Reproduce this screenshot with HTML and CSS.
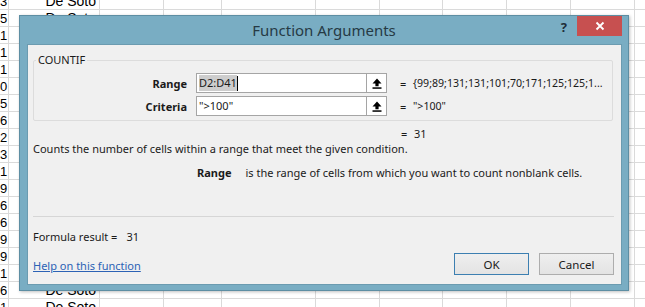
FILE: index.html
```html
<!DOCTYPE html>
<html lang="en">
<head>
    <meta charset="UTF-8">
    <title>Function Arguments</title>
    <link rel="stylesheet" href="styles.css">
</head>
<body>
    <!-- Spreadsheet behind the dialog -->
    <div class="sheet">
        <div class="col col-a">
            <div>3</div><div>5</div><div>1</div><div>1</div><div>1</div><div>0</div><div>5</div>
            <div>6</div><div>2</div><div>3</div><div>1</div><div>9</div><div>6</div><div>6</div>
            <div>9</div><div>9</div><div>1</div><div>6</div><div>1</div>
        </div>
        <div class="col col-b">
            <div>De Soto</div><div>De Soto</div><div></div><div></div><div></div><div></div><div></div>
            <div></div><div></div><div></div><div></div><div></div><div></div><div></div>
            <div></div><div></div><div></div><div>De Soto</div><div>De Soto</div>
        </div>
        <div class="col w63"></div>
        <div class="col w57"></div>
        <div class="col w93"></div>
        <div class="col w63"></div>
        <div class="col w62"></div>
        <div class="col w63"></div>
        <div class="col w63"></div>
        <div class="col w63"></div>
        <div class="col"></div>
    </div>

    <!-- Function Arguments dialog -->
    <div class="dialog">
        <div class="titlebar">
            <span></span>
            <div class="title">Function Arguments</div>
            <div class="controls">
                <span class="help">?</span>
                <span class="close">
                    <svg width="10" height="10" viewBox="0 0 10 10"><path d="M1.5 1.5 L8.5 8.5 M8.5 1.5 L1.5 8.5" stroke="#fff" stroke-width="1.8"/></svg>
                </span>
            </div>
        </div>

        <div class="content">
            <fieldset class="group">
                <legend>COUNTIF</legend>
                <div class="arg-row">
                    <label>Range</label>
                    <div class="field">
                        <span class="text"><span class="sel">D2:D41</span><span class="caret"></span></span>
                        <span class="pick">
                            <svg width="10" height="11" viewBox="0 0 10 11"><path d="M5 0.5 L9.5 5.5 L6.6 5.5 L6.6 8.2 L3.4 8.2 L3.4 5.5 L0.5 5.5 Z" fill="#000"/><rect x="0.5" y="9.3" width="9" height="1.5" fill="#000"/></svg>
                        </span>
                    </div>
                    <span class="eq">=</span>
                    <span class="val">{99;89;131;131;101;70;171;125;125;1...</span>
                </div>
                <div class="arg-row">
                    <label>Criteria</label>
                    <div class="field">
                        <span class="text">"&gt;100"</span>
                        <span class="pick">
                            <svg width="10" height="11" viewBox="0 0 10 11"><path d="M5 0.5 L9.5 5.5 L6.6 5.5 L6.6 8.2 L3.4 8.2 L3.4 5.5 L0.5 5.5 Z" fill="#000"/><rect x="0.5" y="9.3" width="9" height="1.5" fill="#000"/></svg>
                        </span>
                    </div>
                    <span class="eq">=</span>
                    <span class="val">"&gt;100"</span>
                </div>
            </fieldset>

            <div class="result-row"><span class="eq">=</span><span class="val">31</span></div>
            <p class="desc">Counts the number of cells within a range that meet the given condition.</p>
            <p class="arg-help"><b>Range</b>is the range of cells from which you want to count nonblank cells.</p>

            <hr class="sep">
            <div class="formula">Formula result =<span class="formula-val">31</span></div>

            <div class="footer">
                <a href="#" class="help-link">Help on this function</a>
                <div class="buttons">
                    <button class="btn ok">OK</button>
                    <button class="btn">Cancel</button>
                </div>
            </div>
        </div>
    </div>
</body>
</html>
```

FILE: styles.css
```css
body {
    margin: 0;
    width: 645px;
    height: 307px;
    overflow: hidden;
    position: relative;
    background: #fff;
    font-family: "Noto Sans", "Open Sans", sans-serif;
    font-size: 11px;
    color: #1a1a1a;
}

/* spreadsheet */
.sheet {
    display: flex;
    margin-top: -7px;
    height: 323px;
    background: repeating-linear-gradient(to bottom, #fff 0 16px, #dadada 16px 17px);
    font-family: "Liberation Sans", sans-serif;
    font-size: 14px;
    color: #000;
}
.col {
    flex: none;
    border-right: 1px solid #dadada;
}
.col > div {
    height: 17px;
    line-height: 17px;
    overflow: hidden;
    white-space: nowrap;
}
.col-a {
    width: 8px;
    text-align: right;
    font-size: 13px;
}
.col-a > div {
    padding-right: 1px;
}
.col-b {
    width: 90px;
    text-align: right;
}
.col-b > div {
    padding-right: 3px;
}
.w57 { width: 57px; }
.w62 { width: 62px; }
.w63 { width: 63px; }
.w93 { width: 93px; }
.col:last-child {
    flex: 1;
    border-right: none;
}

/* dialog window */
.dialog {
    position: absolute;
    left: 19px;
    top: 15px;
    width: 608px;
    height: 274px;
    background: #79adc3;
    border: 1px solid #5d8ea3;
    box-shadow: 1px 1px 3px rgba(0, 0, 0, 0.25);
    display: flex;
    flex-direction: column;
}
.titlebar {
    height: 28px;
    display: grid;
    grid-template-columns: 1fr auto 1fr;
    align-items: start;
}
.title {
    font-size: 15px;
    line-height: 28px;
    color: #263a45;
}
.controls {
    justify-self: end;
    display: flex;
    align-items: flex-start;
    margin-right: 6px;
}
.help {
    font-weight: bold;
    font-size: 13px;
    color: #1e2e38;
    line-height: 22px;
    margin-right: 10px;
}
.close {
    width: 45px;
    height: 20px;
    background: #c75050;
    display: flex;
    align-items: center;
    justify-content: center;
}

.content {
    flex: 1;
    margin: 0 6px 5px 7px;
    background: #f0f0f0;
    border: 1px solid #6b9bb0;
    display: flex;
    flex-direction: column;
}

.group {
    margin: 8px 8px 0 5px;
    padding: 6px 0 4px 0;
    border: 1px solid #dcdcdc;
    border-radius: 2px;
    min-width: 0;
}
.group legend {
    margin-left: 2px;
    padding: 0 2px;
    line-height: 14px;
    font-size: 11px;
}

.arg-row {
    display: grid;
    grid-template-columns: 162px 191px 26px 1fr;
    align-items: center;
    height: 20px;
    margin-bottom: 3px;
}
.arg-row:last-child {
    margin-bottom: 0;
}
.arg-row label {
    text-align: right;
    padding-right: 9px;
    font-weight: bold;
}
.field {
    height: 18px;
    border: 1px solid #a5a5a5;
    background: #fff;
    display: flex;
}
.text {
    flex: 1;
    padding-left: 2px;
    line-height: 18px;
    display: flex;
    align-items: center;
}
.sel {
    background: #cdcdcd;
    line-height: 16px;
}
.caret {
    width: 1px;
    height: 15px;
    background: #000;
}
.pick {
    width: 19px;
    border-left: 1px solid #a5a5a5;
    display: flex;
    align-items: center;
    justify-content: center;
}
.eq {
    padding-left: 13px;
}
.val {
    white-space: nowrap;
    font-size: 10.6px;
}

.result-row {
    display: flex;
    margin: 5px 0 0 360px;
    line-height: 16px;
}
.result-row .eq {
    width: 26px;
    box-sizing: border-box;
}
.result-row .val {
    font-size: 11px;
}

.desc {
    margin: -1px 0 0 5px;
    line-height: 16px;
}
.arg-help {
    margin: 8px 0 0 169px;
    line-height: 16px;
}
.arg-help b {
    margin-right: 14px;
}

.sep {
    margin: 35px 7px 0 5px;
    border: none;
    border-top: 1px solid #d6d6d6;
    height: 0;
}
.formula {
    margin: 12px 0 0 5px;
    line-height: 16px;
}
.formula-val {
    margin-left: 9px;
}

.footer {
    margin: 8px 7px 0 5px;
    display: flex;
    justify-content: space-between;
    align-items: center;
}
.help-link {
    color: #2c62b5;
    text-decoration: underline;
    line-height: 16px;
    margin-top: 3px;
}
.buttons {
    display: flex;
    gap: 10px;
}
.btn {
    width: 75px;
    height: 22px;
    padding: 0;
    font-family: inherit;
    font-size: 11.5px;
    color: #1a1a1a;
    background: linear-gradient(#efefef, #e3e3e3);
    border: 1px solid #adadad;
}
.btn.ok {
    border-color: #3c7fb1;
}
```
